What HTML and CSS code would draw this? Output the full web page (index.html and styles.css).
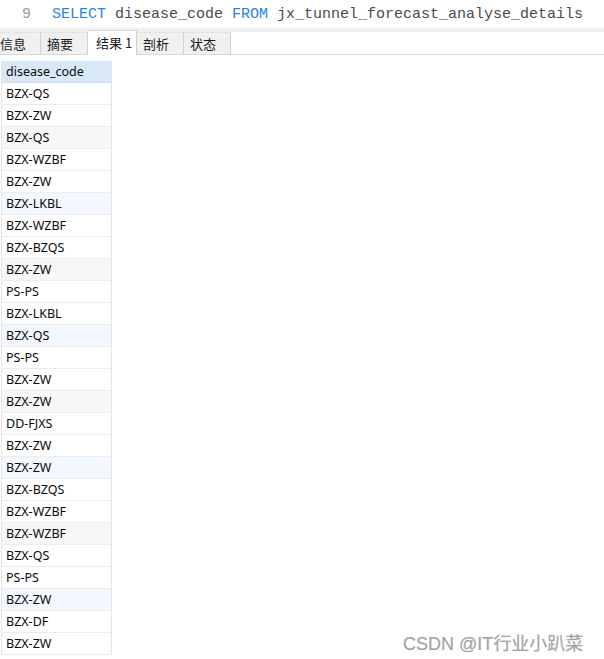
FILE: index.html
```html
<!DOCTYPE html>
<html>
<head>
<meta charset="utf-8">
<link rel="stylesheet" href="styles.css">
</head>
<body>
<div class="editor">
  <span class="lineno">9</span>
  <span class="sql"><span class="kw">SELECT</span> disease_code <span class="kw">FROM</span> jx_tunnel_forecast_analyse_details</span>
</div>
<div class="band"></div>
<div class="tabbar">
  <div class="tab first">信息</div>
  <div class="tab">摘要</div>
  <div class="tab active">结果 1</div>
  <div class="tab">剖析</div>
  <div class="tab">状态</div>
</div>
<div class="grid">
  <div class="cell head">disease_code</div>
  <div class="cell">BZX-QS</div>
  <div class="cell">BZX-ZW</div>
  <div class="cell gray">BZX-QS</div>
  <div class="cell">BZX-WZBF</div>
  <div class="cell">BZX-ZW</div>
  <div class="cell blue">BZX-LKBL</div>
  <div class="cell">BZX-WZBF</div>
  <div class="cell">BZX-BZQS</div>
  <div class="cell gray">BZX-ZW</div>
  <div class="cell">PS-PS</div>
  <div class="cell">BZX-LKBL</div>
  <div class="cell blue">BZX-QS</div>
  <div class="cell">PS-PS</div>
  <div class="cell">BZX-ZW</div>
  <div class="cell gray">BZX-ZW</div>
  <div class="cell">DD-FJXS</div>
  <div class="cell">BZX-ZW</div>
  <div class="cell blue">BZX-ZW</div>
  <div class="cell">BZX-BZQS</div>
  <div class="cell">BZX-WZBF</div>
  <div class="cell gray">BZX-WZBF</div>
  <div class="cell">BZX-QS</div>
  <div class="cell">PS-PS</div>
  <div class="cell blue">BZX-ZW</div>
  <div class="cell">BZX-DF</div>
  <div class="cell">BZX-ZW</div>
</div>
<div class="watermark">CSDN @IT行业小趴菜</div>
</body>
</html>
```
FILE: styles.css
```css
html, body {
  margin: 0;
  padding: 0;
  background: #ffffff;
  width: 604px;
  height: 659px;
  overflow: hidden;
}
body {
  position: relative;
  font-family: "Noto Sans", "Noto Sans CJK SC", sans-serif;
}
.editor {
  height: 28px;
  display: flex;
  align-items: center;
  font-family: "Liberation Mono", "DejaVu Sans Mono", monospace;
  font-size: 15px;
  white-space: pre;
}
.lineno {
  width: 31px;
  text-align: right;
  color: #9a9a9a;
}
.sql {
  margin-left: 21px;
  color: #4a4a4a;
}
.kw {
  color: #2a83e0;
}
.band {
  height: 4px;
  background: #f0f0f0;
}
.tabbar {
  height: 22px;
  display: flex;
  border-bottom: 1px solid #d8d8d8;
  margin-left: -6px;
  font-family: "Noto Sans CJK SC", sans-serif;
  font-size: 13px;
  color: #1a1a1a;
}
.tab {
  width: 47px;
  box-sizing: border-box;
  padding-left: 6px;
  line-height: 22px;
  background: #f0f0f0;
  border-right: 1px solid #d0d0d0;
  border-top: 1px solid #e2e2e2;
}
.tab.active {
  width: 49px;
  padding-left: 8px;
  background: #ffffff;
  margin-top: -2px;
  height: 25px;
  line-height: 24px;
  border-top: 1px solid #dcdcdc;
}
.grid {
  margin: 6px 0 0 1px;
  width: 111px;
  display: flex;
  flex-direction: column;
}
.cell {
  box-sizing: border-box;
  height: 22px;
  line-height: 21px;
  padding-left: 4px;
  font-size: 12.5px;
  color: #0a0a0a;
  border-left: 1px solid #e4e4e4;
  border-right: 1px solid #e4e4e4;
  border-bottom: 1px solid #ececec;
}
.cell.head {
  background: #d8e8f7;
  border-bottom: 1px solid #d0dcea;
}
.cell.gray {
  background: #f7f7f7;
}
.cell.blue {
  background: #f2f8fd;
}
.watermark {
  position: absolute;
  left: 403px;
  top: 629px;
  font-family: "Liberation Sans", "Noto Sans CJK SC", sans-serif;
  font-size: 18px;
  color: #a3a3a3;
  text-shadow: 0 0 1px #d8d8d8;
}
```
